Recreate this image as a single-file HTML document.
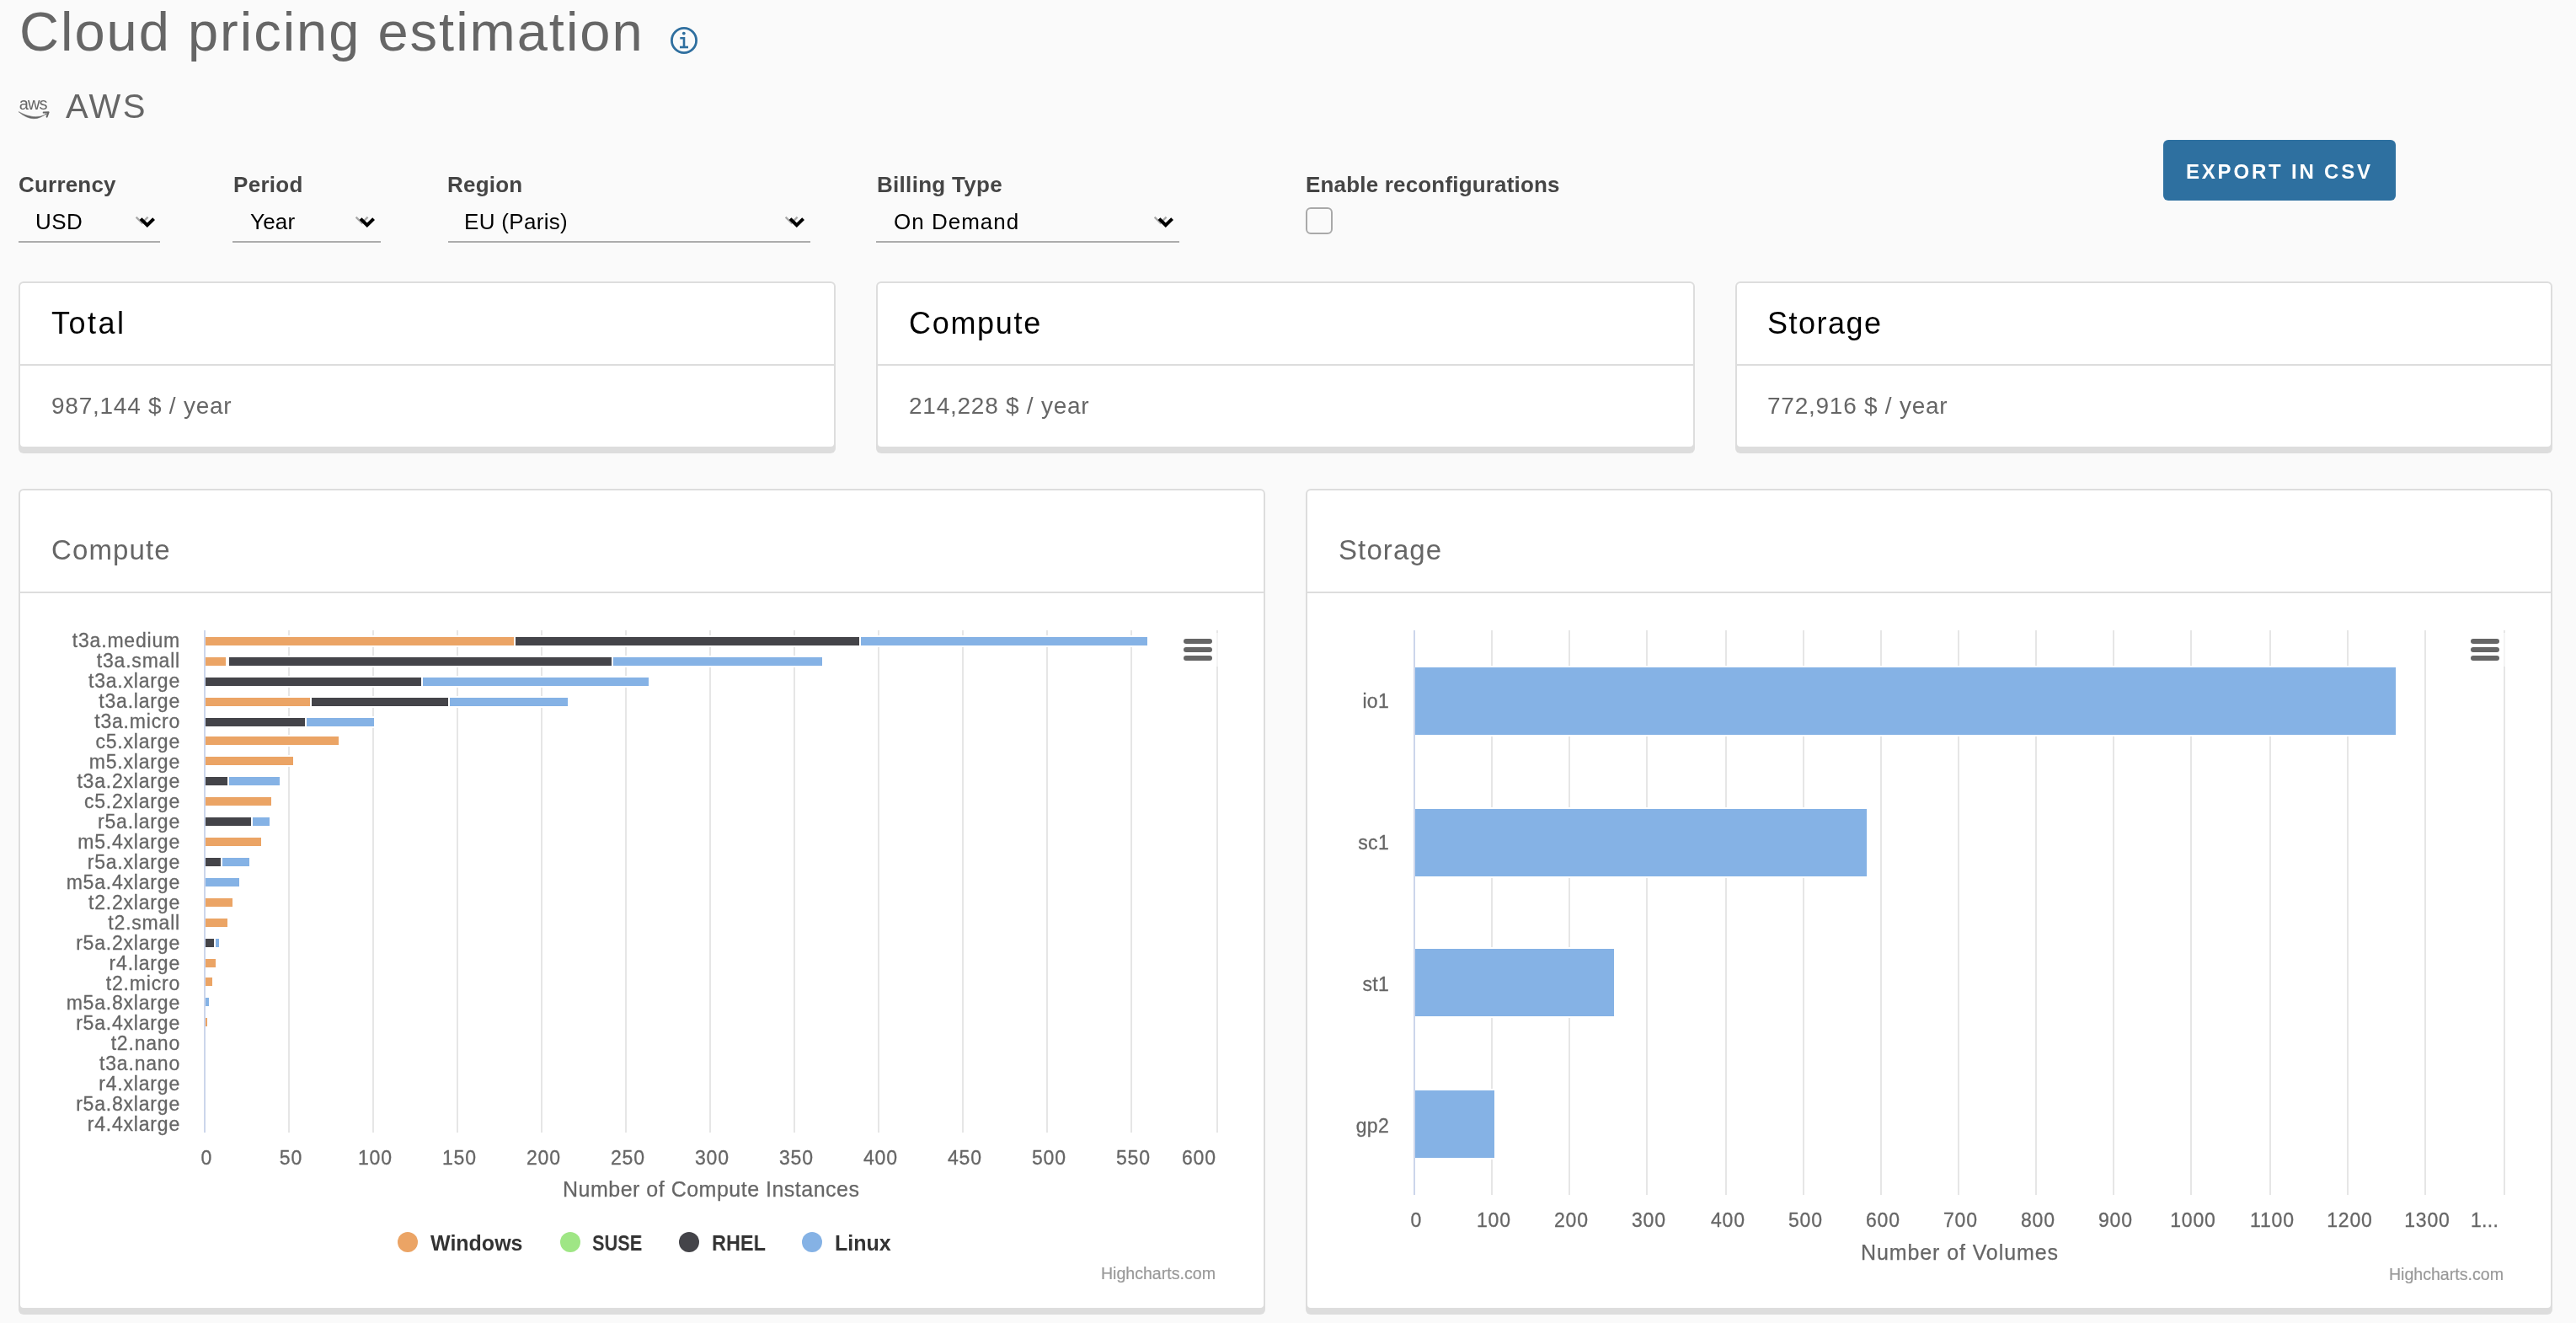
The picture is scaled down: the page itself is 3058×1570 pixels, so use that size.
<!DOCTYPE html>
<html><head><meta charset="utf-8"><title>Cloud pricing estimation</title>
<style>
html,body{margin:0;padding:0;}
body{width:3058px;height:1570px;overflow:hidden;background:#fafafa;position:relative;font-family:'Liberation Sans',sans-serif;}
div{box-sizing:border-box;}
.card{position:absolute;background:#fff;border:2px solid #dddddd;border-radius:6px;box-shadow:0 6px 0 0 #dddddd;}
</style></head><body>
<div style="position:absolute;will-change:transform;top:4.75px;font-size:65px;line-height:65px;height:65px;color:#666;white-space:nowrap;letter-spacing:2.0px;left:22.50px;">Cloud pricing estimation</div>
<svg style="position:absolute;left:792px;top:28px" width="40" height="40" viewBox="0 0 40 40">
<circle cx="20" cy="20" r="14.6" fill="none" stroke="#2f6f9f" stroke-width="2.8"/>
<circle cx="19.8" cy="11.6" r="1.9" fill="#2f6f9f"/>
<path d="M15.3 17.2 H20 V27.8" fill="none" stroke="#2f6f9f" stroke-width="2.6"/>
<path d="M15 28 H25" fill="none" stroke="#2f6f9f" stroke-width="2.6"/>
</svg>
<svg style="position:absolute;left:15px;top:105px" width="60" height="45" viewBox="0 0 60 45">
<text x="7.8" y="25" font-family="Liberation Sans" font-size="20" letter-spacing="-0.9" fill="#666" style="will-change:transform">aws</text>
<path d="M7 27.6 Q25 43 40.2 29.4 L40.6 30.6 Q25 38 7 27.6 Z" fill="#666" stroke="#666" stroke-width="0.5"/>
<path d="M36.7 28.6 L42.6 28.2 L40.6 33.6" fill="none" stroke="#666" stroke-width="2" stroke-linecap="round" stroke-linejoin="round"/>
</svg>
<div style="position:absolute;will-change:transform;top:106.00px;font-size:40px;line-height:40px;height:40px;color:#666;white-space:nowrap;letter-spacing:2.4px;left:78.00px;">AWS</div>
<div style="position:absolute;will-change:transform;top:206.10px;font-size:26px;line-height:26px;height:26px;color:#454545;white-space:nowrap;font-weight:700;letter-spacing:0.2px;left:21.70px;">Currency</div>
<div style="position:absolute;will-change:transform;top:249.90px;font-size:26px;line-height:26px;height:26px;color:#000;white-space:nowrap;letter-spacing:0.4px;left:41.50px;">USD</div>
<div style="position:absolute;left:22.00px;top:286.00px;width:168.00px;height:2.00px;background:#acacac;"></div>
<svg style="position:absolute;left:157.5px;top:250px" width="30" height="26" viewBox="0 0 30 26">
<path d="M3.6 7.6 L10.6 14.6 L17.6 7.6" fill="none" stroke="#a8a8a8" stroke-width="2.3"/>
<path d="M9.0 9.6 L16.8 17.2 L24.6 9.6" fill="none" stroke="#000" stroke-width="4"/>
</svg>
<div style="position:absolute;will-change:transform;top:206.10px;font-size:26px;line-height:26px;height:26px;color:#454545;white-space:nowrap;font-weight:700;letter-spacing:0.3px;left:276.50px;">Period</div>
<div style="position:absolute;will-change:transform;top:249.90px;font-size:26px;line-height:26px;height:26px;color:#000;white-space:nowrap;letter-spacing:0.2px;left:297.00px;">Year</div>
<div style="position:absolute;left:276.00px;top:286.00px;width:176.00px;height:2.00px;background:#acacac;"></div>
<svg style="position:absolute;left:419.0px;top:250px" width="30" height="26" viewBox="0 0 30 26">
<path d="M3.6 7.6 L10.6 14.6 L17.6 7.6" fill="none" stroke="#a8a8a8" stroke-width="2.3"/>
<path d="M9.0 9.6 L16.8 17.2 L24.6 9.6" fill="none" stroke="#000" stroke-width="4"/>
</svg>
<div style="position:absolute;will-change:transform;top:206.10px;font-size:26px;line-height:26px;height:26px;color:#454545;white-space:nowrap;font-weight:700;letter-spacing:0.2px;left:531.20px;">Region</div>
<div style="position:absolute;will-change:transform;top:249.90px;font-size:26px;line-height:26px;height:26px;color:#000;white-space:nowrap;letter-spacing:0.31px;left:550.50px;">EU (Paris)</div>
<div style="position:absolute;left:532.00px;top:286.00px;width:430.00px;height:2.00px;background:#acacac;"></div>
<svg style="position:absolute;left:929.0px;top:250px" width="30" height="26" viewBox="0 0 30 26">
<path d="M3.6 7.6 L10.6 14.6 L17.6 7.6" fill="none" stroke="#a8a8a8" stroke-width="2.3"/>
<path d="M9.0 9.6 L16.8 17.2 L24.6 9.6" fill="none" stroke="#000" stroke-width="4"/>
</svg>
<div style="position:absolute;will-change:transform;top:206.10px;font-size:26px;line-height:26px;height:26px;color:#454545;white-space:nowrap;font-weight:700;letter-spacing:0.3px;left:1040.50px;">Billing Type</div>
<div style="position:absolute;will-change:transform;top:249.90px;font-size:26px;line-height:26px;height:26px;color:#000;white-space:nowrap;letter-spacing:1.0px;left:1061.00px;">On Demand</div>
<div style="position:absolute;left:1040.00px;top:286.00px;width:360.00px;height:2.00px;background:#acacac;"></div>
<svg style="position:absolute;left:1367.0px;top:250px" width="30" height="26" viewBox="0 0 30 26">
<path d="M3.6 7.6 L10.6 14.6 L17.6 7.6" fill="none" stroke="#a8a8a8" stroke-width="2.3"/>
<path d="M9.0 9.6 L16.8 17.2 L24.6 9.6" fill="none" stroke="#000" stroke-width="4"/>
</svg>
<div style="position:absolute;will-change:transform;top:206.10px;font-size:26px;line-height:26px;height:26px;color:#454545;white-space:nowrap;font-weight:700;letter-spacing:0.18px;left:1550.00px;">Enable reconfigurations</div>
<div style="position:absolute;left:1550px;top:245.5px;width:32px;height:32px;border:2px solid #a9a9a9;border-radius:6px;background:#fafafa"></div>
<div style="position:absolute;left:2568px;top:166px;width:276px;height:72px;background:#2e70a0;border-radius:6px"></div>
<div style="position:absolute;will-change:transform;top:191.60px;font-size:24px;line-height:24px;height:24px;color:#fff;white-space:nowrap;font-weight:700;letter-spacing:2.8px;left:2595.00px;">EXPORT IN CSV</div>
<div class="card" style="left:22px;top:334px;width:970px;height:198px"></div>
<div style="position:absolute;left:24.00px;top:432.00px;width:966.00px;height:2.00px;background:#dddddd;"></div>
<div style="position:absolute;will-change:transform;top:365.60px;font-size:36px;line-height:36px;height:36px;color:#000;white-space:nowrap;letter-spacing:2.5px;left:61.00px;">Total</div>
<div style="position:absolute;will-change:transform;top:467.70px;font-size:28px;line-height:28px;height:28px;color:#666;white-space:nowrap;letter-spacing:0.75px;left:61.00px;">987,144 $ / year</div>
<div class="card" style="left:1040px;top:334px;width:972px;height:198px"></div>
<div style="position:absolute;left:1042.00px;top:432.00px;width:968.00px;height:2.00px;background:#dddddd;"></div>
<div style="position:absolute;will-change:transform;top:365.60px;font-size:36px;line-height:36px;height:36px;color:#000;white-space:nowrap;letter-spacing:1.7px;left:1079.00px;">Compute</div>
<div style="position:absolute;will-change:transform;top:467.70px;font-size:28px;line-height:28px;height:28px;color:#666;white-space:nowrap;letter-spacing:0.75px;left:1079.00px;">214,228 $ / year</div>
<div class="card" style="left:2060px;top:334px;width:970px;height:198px"></div>
<div style="position:absolute;left:2062.00px;top:432.00px;width:966.00px;height:2.00px;background:#dddddd;"></div>
<div style="position:absolute;will-change:transform;top:365.60px;font-size:36px;line-height:36px;height:36px;color:#000;white-space:nowrap;letter-spacing:1.5px;left:2098.00px;">Storage</div>
<div style="position:absolute;will-change:transform;top:467.70px;font-size:28px;line-height:28px;height:28px;color:#666;white-space:nowrap;letter-spacing:0.75px;left:2098.00px;">772,916 $ / year</div>
<div class="card" style="left:22px;top:580px;width:1480px;height:974px"></div>
<div style="position:absolute;left:24.00px;top:702.00px;width:1476.00px;height:2.00px;background:#dddddd;"></div>
<div style="position:absolute;will-change:transform;top:636.25px;font-size:33px;line-height:33px;height:33px;color:#666;white-space:nowrap;letter-spacing:1.1px;left:61.00px;">Compute</div>
<div class="card" style="left:1550px;top:580px;width:1480px;height:974px"></div>
<div style="position:absolute;left:1552.00px;top:702.00px;width:1476.00px;height:2.00px;background:#dddddd;"></div>
<div style="position:absolute;will-change:transform;top:636.25px;font-size:33px;line-height:33px;height:33px;color:#666;white-space:nowrap;letter-spacing:1.1px;left:1589.00px;">Storage</div>
<div style="position:absolute;left:342.00px;top:748.00px;width:2.00px;height:595.70px;background:#e6e6e6;"></div>
<div style="position:absolute;left:442.00px;top:748.00px;width:2.00px;height:595.70px;background:#e6e6e6;"></div>
<div style="position:absolute;left:542.00px;top:748.00px;width:2.00px;height:595.70px;background:#e6e6e6;"></div>
<div style="position:absolute;left:642.00px;top:748.00px;width:2.00px;height:595.70px;background:#e6e6e6;"></div>
<div style="position:absolute;left:742.00px;top:748.00px;width:2.00px;height:595.70px;background:#e6e6e6;"></div>
<div style="position:absolute;left:842.00px;top:748.00px;width:2.00px;height:595.70px;background:#e6e6e6;"></div>
<div style="position:absolute;left:942.00px;top:748.00px;width:2.00px;height:595.70px;background:#e6e6e6;"></div>
<div style="position:absolute;left:1042.00px;top:748.00px;width:2.00px;height:595.70px;background:#e6e6e6;"></div>
<div style="position:absolute;left:1142.00px;top:748.00px;width:2.00px;height:595.70px;background:#e6e6e6;"></div>
<div style="position:absolute;left:1242.00px;top:748.00px;width:2.00px;height:595.70px;background:#e6e6e6;"></div>
<div style="position:absolute;left:1342.00px;top:748.00px;width:2.00px;height:595.70px;background:#e6e6e6;"></div>
<div style="position:absolute;left:1444.00px;top:748.00px;width:2.00px;height:595.70px;background:#e6e6e6;"></div>
<div style="position:absolute;left:242.00px;top:748.00px;width:2.00px;height:595.70px;background:#ccd6eb;"></div>
<div style="position:absolute;left:244.00px;top:754.00px;width:1120.00px;height:2.00px;background:#fff;"></div>
<div style="position:absolute;left:244.00px;top:766.00px;width:1120.00px;height:2.00px;background:#fff;"></div>
<div style="position:absolute;left:244.00px;top:756.00px;width:366.00px;height:10.00px;background:#eba465;"></div>
<div style="position:absolute;left:612.00px;top:756.00px;width:408.00px;height:10.00px;background:#444449;"></div>
<div style="position:absolute;left:1022.00px;top:756.00px;width:340.00px;height:10.00px;background:#85b2e5;"></div>
<div style="position:absolute;will-change:transform;top:749.05px;font-size:23px;line-height:23px;height:23px;color:#666;white-space:nowrap;letter-spacing:0.8px;left:14.30px;width:200px;text-align:right;margin-right:-0.8px;-webkit-text-stroke:0.3px #666;">t3a.medium</div>
<div style="position:absolute;left:244.00px;top:778.00px;width:734.00px;height:2.00px;background:#fff;"></div>
<div style="position:absolute;left:244.00px;top:790.00px;width:734.00px;height:2.00px;background:#fff;"></div>
<div style="position:absolute;left:244.00px;top:780.00px;width:24.00px;height:10.00px;background:#eba465;"></div>
<div style="position:absolute;left:272.00px;top:780.00px;width:454.00px;height:10.00px;background:#444449;"></div>
<div style="position:absolute;left:728.00px;top:780.00px;width:248.00px;height:10.00px;background:#85b2e5;"></div>
<div style="position:absolute;will-change:transform;top:772.96px;font-size:23px;line-height:23px;height:23px;color:#666;white-space:nowrap;letter-spacing:0.8px;left:14.30px;width:200px;text-align:right;margin-right:-0.8px;-webkit-text-stroke:0.3px #666;">t3a.small</div>
<div style="position:absolute;left:244.00px;top:802.00px;width:528.00px;height:2.00px;background:#fff;"></div>
<div style="position:absolute;left:244.00px;top:814.00px;width:528.00px;height:2.00px;background:#fff;"></div>
<div style="position:absolute;left:244.00px;top:804.00px;width:256.00px;height:10.00px;background:#444449;"></div>
<div style="position:absolute;left:502.00px;top:804.00px;width:268.00px;height:10.00px;background:#85b2e5;"></div>
<div style="position:absolute;will-change:transform;top:796.87px;font-size:23px;line-height:23px;height:23px;color:#666;white-space:nowrap;letter-spacing:0.8px;left:14.30px;width:200px;text-align:right;margin-right:-0.8px;-webkit-text-stroke:0.3px #666;">t3a.xlarge</div>
<div style="position:absolute;left:244.00px;top:826.00px;width:432.00px;height:2.00px;background:#fff;"></div>
<div style="position:absolute;left:244.00px;top:838.00px;width:432.00px;height:2.00px;background:#fff;"></div>
<div style="position:absolute;left:244.00px;top:828.00px;width:124.00px;height:10.00px;background:#eba465;"></div>
<div style="position:absolute;left:370.00px;top:828.00px;width:162.00px;height:10.00px;background:#444449;"></div>
<div style="position:absolute;left:534.00px;top:828.00px;width:140.00px;height:10.00px;background:#85b2e5;"></div>
<div style="position:absolute;will-change:transform;top:820.78px;font-size:23px;line-height:23px;height:23px;color:#666;white-space:nowrap;letter-spacing:0.8px;left:14.30px;width:200px;text-align:right;margin-right:-0.8px;-webkit-text-stroke:0.3px #666;">t3a.large</div>
<div style="position:absolute;left:244.00px;top:850.00px;width:202.00px;height:2.00px;background:#fff;"></div>
<div style="position:absolute;left:244.00px;top:862.00px;width:202.00px;height:2.00px;background:#fff;"></div>
<div style="position:absolute;left:244.00px;top:852.00px;width:118.00px;height:10.00px;background:#444449;"></div>
<div style="position:absolute;left:364.00px;top:852.00px;width:80.00px;height:10.00px;background:#85b2e5;"></div>
<div style="position:absolute;will-change:transform;top:844.69px;font-size:23px;line-height:23px;height:23px;color:#666;white-space:nowrap;letter-spacing:0.8px;left:14.30px;width:200px;text-align:right;margin-right:-0.8px;-webkit-text-stroke:0.3px #666;">t3a.micro</div>
<div style="position:absolute;left:244.00px;top:872.00px;width:160.00px;height:2.00px;background:#fff;"></div>
<div style="position:absolute;left:244.00px;top:884.00px;width:160.00px;height:2.00px;background:#fff;"></div>
<div style="position:absolute;left:244.00px;top:874.00px;width:158.00px;height:10.00px;background:#eba465;"></div>
<div style="position:absolute;will-change:transform;top:868.60px;font-size:23px;line-height:23px;height:23px;color:#666;white-space:nowrap;letter-spacing:0.8px;left:14.30px;width:200px;text-align:right;margin-right:-0.8px;-webkit-text-stroke:0.3px #666;">c5.xlarge</div>
<div style="position:absolute;left:244.00px;top:896.00px;width:106.00px;height:2.00px;background:#fff;"></div>
<div style="position:absolute;left:244.00px;top:908.00px;width:106.00px;height:2.00px;background:#fff;"></div>
<div style="position:absolute;left:244.00px;top:898.00px;width:104.00px;height:10.00px;background:#eba465;"></div>
<div style="position:absolute;will-change:transform;top:892.51px;font-size:23px;line-height:23px;height:23px;color:#666;white-space:nowrap;letter-spacing:0.8px;left:14.30px;width:200px;text-align:right;margin-right:-0.8px;-webkit-text-stroke:0.3px #666;">m5.xlarge</div>
<div style="position:absolute;left:244.00px;top:920.00px;width:90.00px;height:2.00px;background:#fff;"></div>
<div style="position:absolute;left:244.00px;top:932.00px;width:90.00px;height:2.00px;background:#fff;"></div>
<div style="position:absolute;left:244.00px;top:922.00px;width:26.00px;height:10.00px;background:#444449;"></div>
<div style="position:absolute;left:272.00px;top:922.00px;width:60.00px;height:10.00px;background:#85b2e5;"></div>
<div style="position:absolute;will-change:transform;top:916.42px;font-size:23px;line-height:23px;height:23px;color:#666;white-space:nowrap;letter-spacing:0.8px;left:14.30px;width:200px;text-align:right;margin-right:-0.8px;-webkit-text-stroke:0.3px #666;">t3a.2xlarge</div>
<div style="position:absolute;left:244.00px;top:944.00px;width:80.00px;height:2.00px;background:#fff;"></div>
<div style="position:absolute;left:244.00px;top:956.00px;width:80.00px;height:2.00px;background:#fff;"></div>
<div style="position:absolute;left:244.00px;top:946.00px;width:78.00px;height:10.00px;background:#eba465;"></div>
<div style="position:absolute;will-change:transform;top:940.33px;font-size:23px;line-height:23px;height:23px;color:#666;white-space:nowrap;letter-spacing:0.8px;left:14.30px;width:200px;text-align:right;margin-right:-0.8px;-webkit-text-stroke:0.3px #666;">c5.2xlarge</div>
<div style="position:absolute;left:244.00px;top:968.00px;width:78.00px;height:2.00px;background:#fff;"></div>
<div style="position:absolute;left:244.00px;top:980.00px;width:78.00px;height:2.00px;background:#fff;"></div>
<div style="position:absolute;left:244.00px;top:970.00px;width:54.00px;height:10.00px;background:#444449;"></div>
<div style="position:absolute;left:300.00px;top:970.00px;width:20.00px;height:10.00px;background:#85b2e5;"></div>
<div style="position:absolute;will-change:transform;top:964.24px;font-size:23px;line-height:23px;height:23px;color:#666;white-space:nowrap;letter-spacing:0.8px;left:14.30px;width:200px;text-align:right;margin-right:-0.8px;-webkit-text-stroke:0.3px #666;">r5a.large</div>
<div style="position:absolute;left:244.00px;top:992.00px;width:68.00px;height:2.00px;background:#fff;"></div>
<div style="position:absolute;left:244.00px;top:1004.00px;width:68.00px;height:2.00px;background:#fff;"></div>
<div style="position:absolute;left:244.00px;top:994.00px;width:66.00px;height:10.00px;background:#eba465;"></div>
<div style="position:absolute;will-change:transform;top:988.15px;font-size:23px;line-height:23px;height:23px;color:#666;white-space:nowrap;letter-spacing:0.8px;left:14.30px;width:200px;text-align:right;margin-right:-0.8px;-webkit-text-stroke:0.3px #666;">m5.4xlarge</div>
<div style="position:absolute;left:244.00px;top:1016.00px;width:54.00px;height:2.00px;background:#fff;"></div>
<div style="position:absolute;left:244.00px;top:1028.00px;width:54.00px;height:2.00px;background:#fff;"></div>
<div style="position:absolute;left:244.00px;top:1018.00px;width:18.00px;height:10.00px;background:#444449;"></div>
<div style="position:absolute;left:264.00px;top:1018.00px;width:32.00px;height:10.00px;background:#85b2e5;"></div>
<div style="position:absolute;will-change:transform;top:1012.06px;font-size:23px;line-height:23px;height:23px;color:#666;white-space:nowrap;letter-spacing:0.8px;left:14.30px;width:200px;text-align:right;margin-right:-0.8px;-webkit-text-stroke:0.3px #666;">r5a.xlarge</div>
<div style="position:absolute;left:244.00px;top:1040.00px;width:42.00px;height:2.00px;background:#fff;"></div>
<div style="position:absolute;left:244.00px;top:1052.00px;width:42.00px;height:2.00px;background:#fff;"></div>
<div style="position:absolute;left:244.00px;top:1042.00px;width:40.00px;height:10.00px;background:#85b2e5;"></div>
<div style="position:absolute;will-change:transform;top:1035.97px;font-size:23px;line-height:23px;height:23px;color:#666;white-space:nowrap;letter-spacing:0.8px;left:14.30px;width:200px;text-align:right;margin-right:-0.8px;-webkit-text-stroke:0.3px #666;">m5a.4xlarge</div>
<div style="position:absolute;left:244.00px;top:1064.00px;width:34.00px;height:2.00px;background:#fff;"></div>
<div style="position:absolute;left:244.00px;top:1076.00px;width:34.00px;height:2.00px;background:#fff;"></div>
<div style="position:absolute;left:244.00px;top:1066.00px;width:32.00px;height:10.00px;background:#eba465;"></div>
<div style="position:absolute;will-change:transform;top:1059.88px;font-size:23px;line-height:23px;height:23px;color:#666;white-space:nowrap;letter-spacing:0.8px;left:14.30px;width:200px;text-align:right;margin-right:-0.8px;-webkit-text-stroke:0.3px #666;">t2.2xlarge</div>
<div style="position:absolute;left:244.00px;top:1088.00px;width:28.00px;height:2.00px;background:#fff;"></div>
<div style="position:absolute;left:244.00px;top:1100.00px;width:28.00px;height:2.00px;background:#fff;"></div>
<div style="position:absolute;left:244.00px;top:1090.00px;width:26.00px;height:10.00px;background:#eba465;"></div>
<div style="position:absolute;will-change:transform;top:1083.79px;font-size:23px;line-height:23px;height:23px;color:#666;white-space:nowrap;letter-spacing:0.8px;left:14.30px;width:200px;text-align:right;margin-right:-0.8px;-webkit-text-stroke:0.3px #666;">t2.small</div>
<div style="position:absolute;left:244.00px;top:1112.00px;width:18.00px;height:2.00px;background:#fff;"></div>
<div style="position:absolute;left:244.00px;top:1124.00px;width:18.00px;height:2.00px;background:#fff;"></div>
<div style="position:absolute;left:244.00px;top:1114.00px;width:10.00px;height:10.00px;background:#444449;"></div>
<div style="position:absolute;left:256.00px;top:1114.00px;width:4.00px;height:10.00px;background:#85b2e5;"></div>
<div style="position:absolute;will-change:transform;top:1107.70px;font-size:23px;line-height:23px;height:23px;color:#666;white-space:nowrap;letter-spacing:0.8px;left:14.30px;width:200px;text-align:right;margin-right:-0.8px;-webkit-text-stroke:0.3px #666;">r5a.2xlarge</div>
<div style="position:absolute;left:244.00px;top:1136.00px;width:14.00px;height:2.00px;background:#fff;"></div>
<div style="position:absolute;left:244.00px;top:1148.00px;width:14.00px;height:2.00px;background:#fff;"></div>
<div style="position:absolute;left:244.00px;top:1138.00px;width:12.00px;height:10.00px;background:#eba465;"></div>
<div style="position:absolute;will-change:transform;top:1131.61px;font-size:23px;line-height:23px;height:23px;color:#666;white-space:nowrap;letter-spacing:0.8px;left:14.30px;width:200px;text-align:right;margin-right:-0.8px;-webkit-text-stroke:0.3px #666;">r4.large</div>
<div style="position:absolute;left:244.00px;top:1158.00px;width:10.00px;height:2.00px;background:#fff;"></div>
<div style="position:absolute;left:244.00px;top:1170.00px;width:10.00px;height:2.00px;background:#fff;"></div>
<div style="position:absolute;left:244.00px;top:1160.00px;width:8.00px;height:10.00px;background:#eba465;"></div>
<div style="position:absolute;will-change:transform;top:1155.52px;font-size:23px;line-height:23px;height:23px;color:#666;white-space:nowrap;letter-spacing:0.8px;left:14.30px;width:200px;text-align:right;margin-right:-0.8px;-webkit-text-stroke:0.3px #666;">t2.micro</div>
<div style="position:absolute;left:244.00px;top:1182.00px;width:6.00px;height:2.00px;background:#fff;"></div>
<div style="position:absolute;left:244.00px;top:1194.00px;width:6.00px;height:2.00px;background:#fff;"></div>
<div style="position:absolute;left:244.00px;top:1184.00px;width:4.00px;height:10.00px;background:#85b2e5;"></div>
<div style="position:absolute;will-change:transform;top:1179.43px;font-size:23px;line-height:23px;height:23px;color:#666;white-space:nowrap;letter-spacing:0.8px;left:14.30px;width:200px;text-align:right;margin-right:-0.8px;-webkit-text-stroke:0.3px #666;">m5a.8xlarge</div>
<div style="position:absolute;left:244.00px;top:1206.00px;width:4.00px;height:2.00px;background:#fff;"></div>
<div style="position:absolute;left:244.00px;top:1218.00px;width:4.00px;height:2.00px;background:#fff;"></div>
<div style="position:absolute;left:244.00px;top:1208.00px;width:2.00px;height:10.00px;background:#eba465;"></div>
<div style="position:absolute;will-change:transform;top:1203.34px;font-size:23px;line-height:23px;height:23px;color:#666;white-space:nowrap;letter-spacing:0.8px;left:14.30px;width:200px;text-align:right;margin-right:-0.8px;-webkit-text-stroke:0.3px #666;">r5a.4xlarge</div>
<div style="position:absolute;will-change:transform;top:1227.25px;font-size:23px;line-height:23px;height:23px;color:#666;white-space:nowrap;letter-spacing:0.8px;left:14.30px;width:200px;text-align:right;margin-right:-0.8px;-webkit-text-stroke:0.3px #666;">t2.nano</div>
<div style="position:absolute;will-change:transform;top:1251.16px;font-size:23px;line-height:23px;height:23px;color:#666;white-space:nowrap;letter-spacing:0.8px;left:14.30px;width:200px;text-align:right;margin-right:-0.8px;-webkit-text-stroke:0.3px #666;">t3a.nano</div>
<div style="position:absolute;will-change:transform;top:1275.07px;font-size:23px;line-height:23px;height:23px;color:#666;white-space:nowrap;letter-spacing:0.8px;left:14.30px;width:200px;text-align:right;margin-right:-0.8px;-webkit-text-stroke:0.3px #666;">r4.xlarge</div>
<div style="position:absolute;will-change:transform;top:1298.98px;font-size:23px;line-height:23px;height:23px;color:#666;white-space:nowrap;letter-spacing:0.8px;left:14.30px;width:200px;text-align:right;margin-right:-0.8px;-webkit-text-stroke:0.3px #666;">r5a.8xlarge</div>
<div style="position:absolute;will-change:transform;top:1322.89px;font-size:23px;line-height:23px;height:23px;color:#666;white-space:nowrap;letter-spacing:0.8px;left:14.30px;width:200px;text-align:right;margin-right:-0.8px;-webkit-text-stroke:0.3px #666;">r4.4xlarge</div>
<div style="position:absolute;will-change:transform;top:1363.05px;font-size:23px;line-height:23px;height:23px;color:#666;white-space:nowrap;letter-spacing:0.9px;left:204.95px;width:80px;text-align:center;text-indent:0.9px;-webkit-text-stroke:0.3px #666;">0</div>
<div style="position:absolute;will-change:transform;top:1363.05px;font-size:23px;line-height:23px;height:23px;color:#666;white-space:nowrap;letter-spacing:0.9px;left:304.95px;width:80px;text-align:center;text-indent:0.9px;-webkit-text-stroke:0.3px #666;">50</div>
<div style="position:absolute;will-change:transform;top:1363.05px;font-size:23px;line-height:23px;height:23px;color:#666;white-space:nowrap;letter-spacing:0.9px;left:404.95px;width:80px;text-align:center;text-indent:0.9px;-webkit-text-stroke:0.3px #666;">100</div>
<div style="position:absolute;will-change:transform;top:1363.05px;font-size:23px;line-height:23px;height:23px;color:#666;white-space:nowrap;letter-spacing:0.9px;left:504.95px;width:80px;text-align:center;text-indent:0.9px;-webkit-text-stroke:0.3px #666;">150</div>
<div style="position:absolute;will-change:transform;top:1363.05px;font-size:23px;line-height:23px;height:23px;color:#666;white-space:nowrap;letter-spacing:0.9px;left:604.95px;width:80px;text-align:center;text-indent:0.9px;-webkit-text-stroke:0.3px #666;">200</div>
<div style="position:absolute;will-change:transform;top:1363.05px;font-size:23px;line-height:23px;height:23px;color:#666;white-space:nowrap;letter-spacing:0.9px;left:704.95px;width:80px;text-align:center;text-indent:0.9px;-webkit-text-stroke:0.3px #666;">250</div>
<div style="position:absolute;will-change:transform;top:1363.05px;font-size:23px;line-height:23px;height:23px;color:#666;white-space:nowrap;letter-spacing:0.9px;left:804.95px;width:80px;text-align:center;text-indent:0.9px;-webkit-text-stroke:0.3px #666;">300</div>
<div style="position:absolute;will-change:transform;top:1363.05px;font-size:23px;line-height:23px;height:23px;color:#666;white-space:nowrap;letter-spacing:0.9px;left:904.95px;width:80px;text-align:center;text-indent:0.9px;-webkit-text-stroke:0.3px #666;">350</div>
<div style="position:absolute;will-change:transform;top:1363.05px;font-size:23px;line-height:23px;height:23px;color:#666;white-space:nowrap;letter-spacing:0.9px;left:1004.95px;width:80px;text-align:center;text-indent:0.9px;-webkit-text-stroke:0.3px #666;">400</div>
<div style="position:absolute;will-change:transform;top:1363.05px;font-size:23px;line-height:23px;height:23px;color:#666;white-space:nowrap;letter-spacing:0.9px;left:1104.95px;width:80px;text-align:center;text-indent:0.9px;-webkit-text-stroke:0.3px #666;">450</div>
<div style="position:absolute;will-change:transform;top:1363.05px;font-size:23px;line-height:23px;height:23px;color:#666;white-space:nowrap;letter-spacing:0.9px;left:1204.95px;width:80px;text-align:center;text-indent:0.9px;-webkit-text-stroke:0.3px #666;">500</div>
<div style="position:absolute;will-change:transform;top:1363.05px;font-size:23px;line-height:23px;height:23px;color:#666;white-space:nowrap;letter-spacing:0.9px;left:1304.95px;width:80px;text-align:center;text-indent:0.9px;-webkit-text-stroke:0.3px #666;">550</div>
<div style="position:absolute;will-change:transform;top:1363.05px;font-size:23px;line-height:23px;height:23px;color:#666;white-space:nowrap;letter-spacing:0.9px;left:1364.40px;width:80px;text-align:right;margin-right:-0.9px;-webkit-text-stroke:0.3px #666;">600</div>
<div style="position:absolute;will-change:transform;top:1399.15px;font-size:25px;line-height:25px;height:25px;color:#666;white-space:nowrap;letter-spacing:0.5px;left:593.50px;width:500px;text-align:center;text-indent:0.5px;-webkit-text-stroke:0.25px #666;">Number of Compute Instances</div>
<div style="position:absolute;left:471.8px;top:1462px;width:24px;height:24px;border-radius:50%;background:#eba465"></div>
<div style="position:absolute;will-change:transform;top:1462.75px;font-size:25px;line-height:25px;height:25px;color:#333;white-space:nowrap;font-weight:700;left:510.50px;">Windows</div>
<div style="position:absolute;left:664.6px;top:1462px;width:24px;height:24px;border-radius:50%;background:#9fe685"></div>
<div style="position:absolute;will-change:transform;top:1462.75px;font-size:25px;line-height:25px;height:25px;color:#333;white-space:nowrap;font-weight:700;left:703.40px;transform:scaleX(0.87);transform-origin:0 0;">SUSE</div>
<div style="position:absolute;left:806.3px;top:1462px;width:24px;height:24px;border-radius:50%;background:#444449"></div>
<div style="position:absolute;will-change:transform;top:1462.75px;font-size:25px;line-height:25px;height:25px;color:#333;white-space:nowrap;font-weight:700;left:845.30px;transform:scaleX(0.94);transform-origin:0 0;">RHEL</div>
<div style="position:absolute;left:951.8px;top:1462px;width:24px;height:24px;border-radius:50%;background:#85b2e5"></div>
<div style="position:absolute;will-change:transform;top:1462.75px;font-size:25px;line-height:25px;height:25px;color:#333;white-space:nowrap;font-weight:700;left:990.90px;">Linux</div>
<div style="position:absolute;will-change:transform;top:1502.34px;font-size:19.6px;line-height:19.6px;height:19.6px;color:#999;white-space:nowrap;left:1143.00px;width:300px;text-align:right;-webkit-text-stroke:0.2px #999;">Highcharts.com</div>
<div style="position:absolute;left:1444.00px;top:751.00px;width:2.00px;height:40.00px;background:rgba(255,255,255,0.55);"></div>
<div style="position:absolute;left:1405px;top:758px;width:34px;height:5.8px;border-radius:3px;background:#666"></div>
<div style="position:absolute;left:1405px;top:768px;width:34px;height:5.8px;border-radius:3px;background:#666"></div>
<div style="position:absolute;left:1405px;top:778px;width:34px;height:5.8px;border-radius:3px;background:#666"></div>
<div style="position:absolute;left:1770.00px;top:748.00px;width:2.00px;height:670.00px;background:#e6e6e6;"></div>
<div style="position:absolute;left:1862.00px;top:748.00px;width:2.00px;height:670.00px;background:#e6e6e6;"></div>
<div style="position:absolute;left:1954.00px;top:748.00px;width:2.00px;height:670.00px;background:#e6e6e6;"></div>
<div style="position:absolute;left:2048.00px;top:748.00px;width:2.00px;height:670.00px;background:#e6e6e6;"></div>
<div style="position:absolute;left:2140.00px;top:748.00px;width:2.00px;height:670.00px;background:#e6e6e6;"></div>
<div style="position:absolute;left:2232.00px;top:748.00px;width:2.00px;height:670.00px;background:#e6e6e6;"></div>
<div style="position:absolute;left:2324.00px;top:748.00px;width:2.00px;height:670.00px;background:#e6e6e6;"></div>
<div style="position:absolute;left:2416.00px;top:748.00px;width:2.00px;height:670.00px;background:#e6e6e6;"></div>
<div style="position:absolute;left:2508.00px;top:748.00px;width:2.00px;height:670.00px;background:#e6e6e6;"></div>
<div style="position:absolute;left:2600.00px;top:748.00px;width:2.00px;height:670.00px;background:#e6e6e6;"></div>
<div style="position:absolute;left:2694.00px;top:748.00px;width:2.00px;height:670.00px;background:#e6e6e6;"></div>
<div style="position:absolute;left:2786.00px;top:748.00px;width:2.00px;height:670.00px;background:#e6e6e6;"></div>
<div style="position:absolute;left:2878.00px;top:748.00px;width:2.00px;height:670.00px;background:#e6e6e6;"></div>
<div style="position:absolute;left:2972.00px;top:748.00px;width:2.00px;height:670.00px;background:#e6e6e6;"></div>
<div style="position:absolute;left:1678.00px;top:748.00px;width:2.00px;height:670.00px;background:#ccd6eb;"></div>
<div style="position:absolute;left:1680.00px;top:790.00px;width:1166.00px;height:2.00px;background:#fff;"></div>
<div style="position:absolute;left:1680.00px;top:872.00px;width:1166.00px;height:2.00px;background:#fff;"></div>
<div style="position:absolute;left:1680.00px;top:792.00px;width:1164.00px;height:80.00px;background:#85b2e5;"></div>
<div style="position:absolute;will-change:transform;top:821.15px;font-size:23px;line-height:23px;height:23px;color:#666;white-space:nowrap;letter-spacing:0.3px;left:1548.80px;width:100px;text-align:right;margin-right:-0.3px;-webkit-text-stroke:0.3px #666;">io1</div>
<div style="position:absolute;left:1680.00px;top:958.00px;width:538.00px;height:2.00px;background:#fff;"></div>
<div style="position:absolute;left:1680.00px;top:1040.00px;width:538.00px;height:2.00px;background:#fff;"></div>
<div style="position:absolute;left:1680.00px;top:960.00px;width:536.00px;height:80.00px;background:#85b2e5;"></div>
<div style="position:absolute;will-change:transform;top:989.15px;font-size:23px;line-height:23px;height:23px;color:#666;white-space:nowrap;letter-spacing:0.3px;left:1548.80px;width:100px;text-align:right;margin-right:-0.3px;-webkit-text-stroke:0.3px #666;">sc1</div>
<div style="position:absolute;left:1680.00px;top:1124.00px;width:238.00px;height:2.00px;background:#fff;"></div>
<div style="position:absolute;left:1680.00px;top:1206.00px;width:238.00px;height:2.00px;background:#fff;"></div>
<div style="position:absolute;left:1680.00px;top:1126.00px;width:236.00px;height:80.00px;background:#85b2e5;"></div>
<div style="position:absolute;will-change:transform;top:1157.15px;font-size:23px;line-height:23px;height:23px;color:#666;white-space:nowrap;letter-spacing:0.3px;left:1548.80px;width:100px;text-align:right;margin-right:-0.3px;-webkit-text-stroke:0.3px #666;">st1</div>
<div style="position:absolute;left:1680.00px;top:1292.00px;width:96.00px;height:2.00px;background:#fff;"></div>
<div style="position:absolute;left:1680.00px;top:1374.00px;width:96.00px;height:2.00px;background:#fff;"></div>
<div style="position:absolute;left:1680.00px;top:1294.00px;width:94.00px;height:80.00px;background:#85b2e5;"></div>
<div style="position:absolute;will-change:transform;top:1325.15px;font-size:23px;line-height:23px;height:23px;color:#666;white-space:nowrap;letter-spacing:0.3px;left:1548.80px;width:100px;text-align:right;margin-right:-0.3px;-webkit-text-stroke:0.3px #666;">gp2</div>
<div style="position:absolute;will-change:transform;top:1436.95px;font-size:23px;line-height:23px;height:23px;color:#666;white-space:nowrap;letter-spacing:0.8px;left:1630.90px;width:100px;text-align:center;text-indent:0.8px;-webkit-text-stroke:0.3px #666;">0</div>
<div style="position:absolute;will-change:transform;top:1436.95px;font-size:23px;line-height:23px;height:23px;color:#666;white-space:nowrap;letter-spacing:0.8px;left:1722.90px;width:100px;text-align:center;text-indent:0.8px;-webkit-text-stroke:0.3px #666;">100</div>
<div style="position:absolute;will-change:transform;top:1436.95px;font-size:23px;line-height:23px;height:23px;color:#666;white-space:nowrap;letter-spacing:0.8px;left:1814.90px;width:100px;text-align:center;text-indent:0.8px;-webkit-text-stroke:0.3px #666;">200</div>
<div style="position:absolute;will-change:transform;top:1436.95px;font-size:23px;line-height:23px;height:23px;color:#666;white-space:nowrap;letter-spacing:0.8px;left:1906.90px;width:100px;text-align:center;text-indent:0.8px;-webkit-text-stroke:0.3px #666;">300</div>
<div style="position:absolute;will-change:transform;top:1436.95px;font-size:23px;line-height:23px;height:23px;color:#666;white-space:nowrap;letter-spacing:0.8px;left:2000.90px;width:100px;text-align:center;text-indent:0.8px;-webkit-text-stroke:0.3px #666;">400</div>
<div style="position:absolute;will-change:transform;top:1436.95px;font-size:23px;line-height:23px;height:23px;color:#666;white-space:nowrap;letter-spacing:0.8px;left:2092.90px;width:100px;text-align:center;text-indent:0.8px;-webkit-text-stroke:0.3px #666;">500</div>
<div style="position:absolute;will-change:transform;top:1436.95px;font-size:23px;line-height:23px;height:23px;color:#666;white-space:nowrap;letter-spacing:0.8px;left:2184.90px;width:100px;text-align:center;text-indent:0.8px;-webkit-text-stroke:0.3px #666;">600</div>
<div style="position:absolute;will-change:transform;top:1436.95px;font-size:23px;line-height:23px;height:23px;color:#666;white-space:nowrap;letter-spacing:0.8px;left:2276.90px;width:100px;text-align:center;text-indent:0.8px;-webkit-text-stroke:0.3px #666;">700</div>
<div style="position:absolute;will-change:transform;top:1436.95px;font-size:23px;line-height:23px;height:23px;color:#666;white-space:nowrap;letter-spacing:0.8px;left:2368.90px;width:100px;text-align:center;text-indent:0.8px;-webkit-text-stroke:0.3px #666;">800</div>
<div style="position:absolute;will-change:transform;top:1436.95px;font-size:23px;line-height:23px;height:23px;color:#666;white-space:nowrap;letter-spacing:0.8px;left:2460.90px;width:100px;text-align:center;text-indent:0.8px;-webkit-text-stroke:0.3px #666;">900</div>
<div style="position:absolute;will-change:transform;top:1436.95px;font-size:23px;line-height:23px;height:23px;color:#666;white-space:nowrap;letter-spacing:0.8px;left:2552.90px;width:100px;text-align:center;text-indent:0.8px;-webkit-text-stroke:0.3px #666;">1000</div>
<div style="position:absolute;will-change:transform;top:1436.95px;font-size:23px;line-height:23px;height:23px;color:#666;white-space:nowrap;letter-spacing:0.8px;left:2646.90px;width:100px;text-align:center;text-indent:0.8px;-webkit-text-stroke:0.3px #666;">1100</div>
<div style="position:absolute;will-change:transform;top:1436.95px;font-size:23px;line-height:23px;height:23px;color:#666;white-space:nowrap;letter-spacing:0.8px;left:2738.90px;width:100px;text-align:center;text-indent:0.8px;-webkit-text-stroke:0.3px #666;">1200</div>
<div style="position:absolute;will-change:transform;top:1436.95px;font-size:23px;line-height:23px;height:23px;color:#666;white-space:nowrap;letter-spacing:0.8px;left:2830.90px;width:100px;text-align:center;text-indent:0.8px;-webkit-text-stroke:0.3px #666;">1300</div>
<div style="position:absolute;will-change:transform;top:1436.95px;font-size:23px;line-height:23px;height:23px;color:#666;white-space:nowrap;letter-spacing:0.3px;left:2933.00px;-webkit-text-stroke:0.3px #666;">1...</div>
<div style="position:absolute;will-change:transform;top:1473.95px;font-size:25px;line-height:25px;height:25px;color:#666;white-space:nowrap;letter-spacing:0.9px;left:2126.00px;width:400px;text-align:center;text-indent:0.9px;-webkit-text-stroke:0.25px #666;">Number of Volumes</div>
<div style="position:absolute;will-change:transform;top:1503.14px;font-size:19.6px;line-height:19.6px;height:19.6px;color:#999;white-space:nowrap;left:2671.50px;width:300px;text-align:right;-webkit-text-stroke:0.2px #999;">Highcharts.com</div>
<div style="position:absolute;left:2972.00px;top:751.00px;width:2.00px;height:40.00px;background:rgba(255,255,255,0.55);"></div>
<div style="position:absolute;left:2933px;top:758px;width:34px;height:5.8px;border-radius:3px;background:#666"></div>
<div style="position:absolute;left:2933px;top:768px;width:34px;height:5.8px;border-radius:3px;background:#666"></div>
<div style="position:absolute;left:2933px;top:778px;width:34px;height:5.8px;border-radius:3px;background:#666"></div>
</body></html>
